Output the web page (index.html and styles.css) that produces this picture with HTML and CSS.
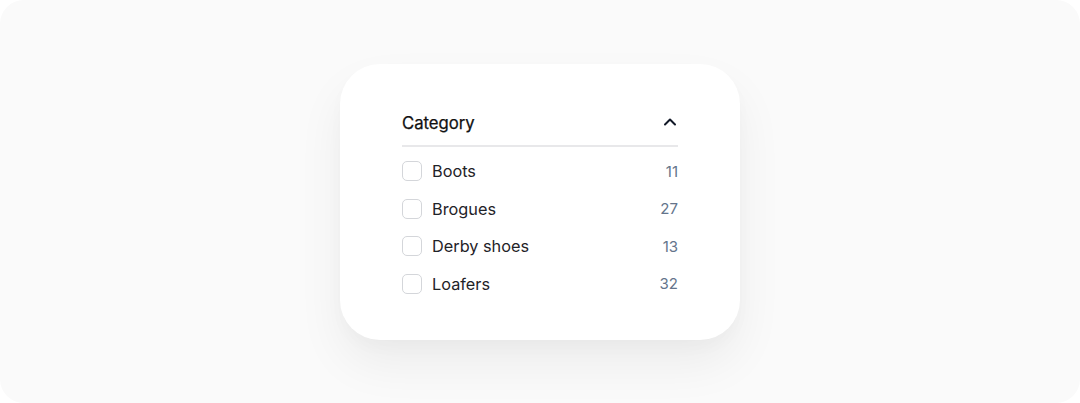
FILE: index.html
```html
<!DOCTYPE html>
<html>
<head>
<meta charset="utf-8">
<link rel="stylesheet" href="styles.css">
</head>
<body>
<div class="frame">
  <div class="card">
    <div class="header">
      <span class="title">Category</span>
      <svg class="chev" width="16" height="16" viewBox="0 0 16 16" fill="none"><path d="M3 10.5 L8 5.5 L13 10.5" stroke="#111827" stroke-width="2" stroke-linecap="round" stroke-linejoin="round"/></svg>
    </div>
    <ul class="list">
      <li class="row"><span class="box"></span><span class="label">Boots</span><span class="count">11</span></li>
      <li class="row"><span class="box"></span><span class="label">Brogues</span><span class="count">27</span></li>
      <li class="row"><span class="box"></span><span class="label">Derby shoes</span><span class="count">13</span></li>
      <li class="row"><span class="box"></span><span class="label">Loafers</span><span class="count">32</span></li>
    </ul>
  </div>
</div>
</body>
</html>
```
FILE: styles.css
```css
html, body { margin: 0; padding: 0; background: #ffffff; }
body { width: 1080px; height: 403px; overflow: hidden; font-family: Inter, "Noto Sans", sans-serif; }
.frame {
  width: 1080px; height: 403px; box-sizing: border-box;
  background: #fafafa; border-radius: 24px;
  display: flex; align-items: center; justify-content: center;
}
.card {
  width: 400px; height: 276px; box-sizing: border-box;
  background: #ffffff; border-radius: 40px;
  padding: 43px 62px 32px;
  box-shadow: 0 24px 48px rgba(0,0,0,0.06), 0 8px 16px rgba(0,0,0,0.02);
}
.header {
  display: flex; align-items: center; justify-content: space-between;
  height: 32px; padding-bottom: 6px; border-bottom: 2px solid #e8e8ea;
  box-sizing: content-box;
}
.title { font-size: 16.7px; font-weight: 400; color: #111111; -webkit-text-stroke: 0.25px #111111; }
.chev { margin-top: -2px; }
.list { list-style: none; margin: 0; padding: 6px 0 0; }
.row { display: flex; align-items: center; height: 37.5px; }
.box {
  width: 20px; height: 20px; box-sizing: border-box;
  border: 1px solid #d4d6da; border-radius: 5px; margin-right: 10px; flex: none;
}
.label { font-size: 16.3px; color: #1f2328; flex: 1; }
.count { font-size: 15px; color: #64748b; }
```
